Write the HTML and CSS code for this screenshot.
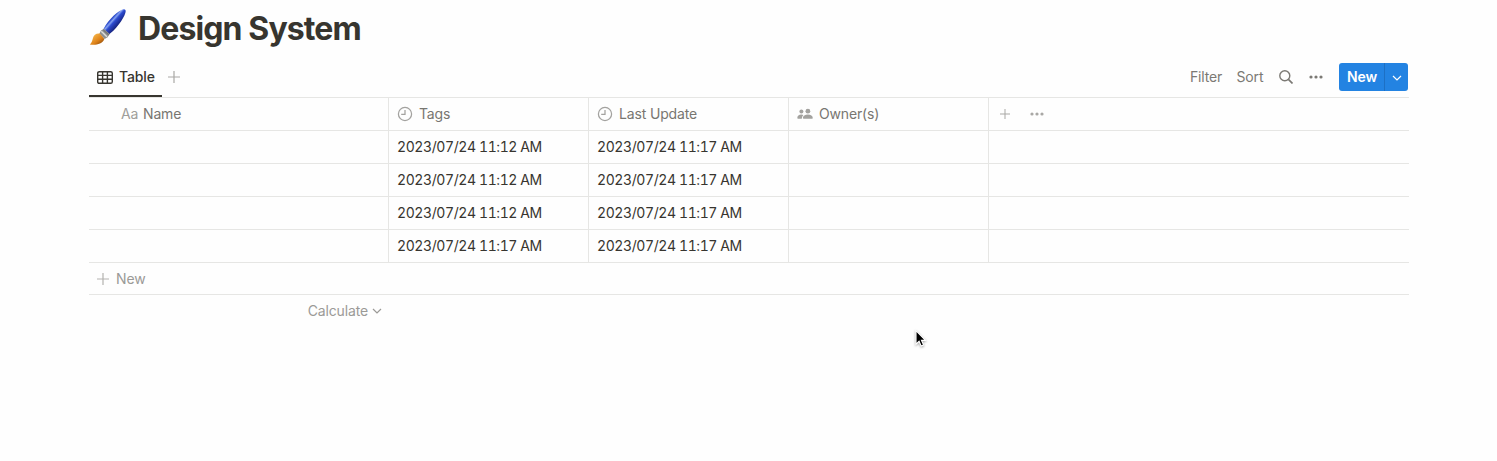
FILE: index.html
```html
<!DOCTYPE html>
<html lang="en">
<head>
<meta charset="utf-8">
<title>Design System</title>
<link rel="stylesheet" href="styles.css">
</head>
<body>
<svg width="0" height="0" class="defs" aria-hidden="true">
  <defs>
    <linearGradient id="handle" gradientUnits="userSpaceOnUse" x1="20" y1="10" x2="29" y2="18">
      <stop offset="0" stop-color="#1c2f96"/><stop offset="0.22" stop-color="#2f4fd0"/><stop offset="0.36" stop-color="#86a2f0"/>
      <stop offset="0.52" stop-color="#2c4bd0"/><stop offset="1" stop-color="#141f78"/>
    </linearGradient>
    <linearGradient id="bristle" x1="0" y1="0" x2="1" y2="1">
      <stop offset="0.2" stop-color="#f3b145"/><stop offset="0.6" stop-color="#dd8118"/><stop offset="1" stop-color="#70380a"/>
    </linearGradient>
    <symbol id="clock" viewBox="0 0 16 16"><g fill="none" stroke="currentColor" stroke-width="1.25"><circle cx="8" cy="8" r="6.6"/><path d="M8 3.9V8.4H4.2"/></g></symbol>
    <symbol id="plus" viewBox="0 0 12 12"><path d="M6 0V12M0 6H12" fill="none" stroke="currentColor" stroke-width="1.2"/></symbol>
    <symbol id="dots" viewBox="0 0 14 4"><g fill="currentColor"><circle cx="2" cy="2" r="1.6"/><circle cx="7" cy="2" r="1.6"/><circle cx="12" cy="2" r="1.6"/></g></symbol>
    <symbol id="chevron" viewBox="0 0 10 6"><path d="M1 1L5 5L9 1" fill="none" stroke="currentColor" stroke-width="1.2"/></symbol>
  </defs>
</svg>
<main class="page">
  <header class="title-bar">
    <svg class="brush" viewBox="0 0 38 38">
      <path d="M13.5 23.5C16.5 15 26 5 33 1.7C36 .4 37.4 2 36.4 4.8C34.5 11.5 26.5 22 18.4 27.8Z" fill="url(#handle)"/>
      <path d="M12 22.4L15 20.8L20.7 26L18.6 29.2L15.7 31L10.3 25.8Z" fill="#8f908f"/>
      <path d="M12.3 23.3L17.9 28.8" stroke="#deded9" stroke-width="1.5"/>
      <path d="M14.3 21.9L19.8 27" stroke="#555" stroke-width=".7"/>
      <path d="M10.8 25.6C7 25.2 4.7 27.2 3.9 30.2C3.3 32.8 2.6 34.8.8 36.5C6 37.4 13.2 36.6 15.4 31Z" fill="url(#bristle)"/>
    </svg>
    <h1 class="title">Design System</h1>
  </header>
  <nav class="toolbar">
    <div class="tab">
      <svg class="icon-table" viewBox="0 0 16 13"><path d="M2.3.7H13.7Q15.3.7 15.3 2.3V10.7Q15.3 12.3 13.7 12.3H2.3Q.7 12.3.7 10.7V2.3Q.7.7 2.3.7ZM.7 4.4H15.3M.7 8.3H15.3M5.6.7V12.3M10.4.7V12.3" fill="none" stroke="currentColor" stroke-width="1.4"/></svg>
      <span class="tab-label">Table</span>
    </div>
    <svg class="add-view"><use href="#plus"/></svg>
    <div class="actions">
      <span class="filter">Filter</span>
      <span class="sort">Sort</span>
      <svg class="icon-search" viewBox="0 0 14 14"><g fill="none" stroke="currentColor" stroke-width="1.4"><circle cx="5.8" cy="5.8" r="5"/><path d="M9.4 9.4L13.5 13.5" stroke-width="1.7"/></g></svg>
      <svg class="icon-more"><use href="#dots"/></svg>
      <div class="new-button">
        <span class="new-label">New</span>
        <span class="new-menu"><svg class="chevron"><use href="#chevron"/></svg></span>
      </div>
    </div>
  </nav>
  <section class="table">
    <div class="row head">
      <div class="cell name"><span class="aa">Aa</span><span class="h-name">Name</span></div>
      <div class="cell"><svg class="icon"><use href="#clock"/></svg><span class="h-tags">Tags</span></div>
      <div class="cell"><svg class="icon"><use href="#clock"/></svg><span class="h-update">Last Update</span></div>
      <div class="cell"><svg class="icon" viewBox="0 0 16 16"><g fill="currentColor"><circle cx="4.4" cy="5.5" r="2"/><circle cx="10.9" cy="5.2" r="2.4"/><path d="M.3 11.9C.3 9.8 2 8.4 4.3 8.4Q5.6 8.4 6.4 8.9Q5 10 4.8 12.7H1.1Q.3 12.7.3 11.9ZM5.9 11.9C5.9 9.9 8.1 8.6 10.9 8.6S15.8 9.9 15.8 11.9Q15.8 12.7 15 12.7H6.7Q5.9 12.7 5.9 11.9Z"/></g></svg><span class="h-owner">Owner(s)</span></div>
      <div class="cell extra"><svg class="add-col"><use href="#plus"/></svg><svg class="more-col"><use href="#dots"/></svg></div>
    </div>
    <div class="row"><div class="cell"></div><div class="cell"><span class="date">2023/07/24 11:12 AM</span></div><div class="cell"><span class="date">2023/07/24 11:17 AM</span></div><div class="cell"></div><div class="cell"></div></div>
    <div class="row"><div class="cell"></div><div class="cell"><span class="date">2023/07/24 11:12 AM</span></div><div class="cell"><span class="date">2023/07/24 11:17 AM</span></div><div class="cell"></div><div class="cell"></div></div>
    <div class="row"><div class="cell"></div><div class="cell"><span class="date">2023/07/24 11:12 AM</span></div><div class="cell"><span class="date">2023/07/24 11:17 AM</span></div><div class="cell"></div><div class="cell"></div></div>
    <div class="row"><div class="cell"></div><div class="cell"><span class="date">2023/07/24 11:17 AM</span></div><div class="cell"><span class="date">2023/07/24 11:17 AM</span></div><div class="cell"></div><div class="cell"></div></div>
    <div class="new-row"><svg class="add-row"><use href="#plus"/></svg><span class="add-label">New</span></div>
    <div class="calc"><span class="calc-label">Calculate</span><svg class="chevron"><use href="#chevron"/></svg></div>
  </section>
</main>
<svg class="cursor" viewBox="0 0 14 20"><path d="M2 1.5V15.2L5.1 12.3L7.2 17.1L9.6 16L7.5 11.4H11.5Z" fill="#000" stroke="#fff" stroke-width="1.1"/></svg>
</body>
</html>
```
FILE: styles.css
```css
* { box-sizing: border-box; }
body {
  margin: 0;
  height: 461px;
  overflow: hidden;
  background: #fefefe;
  color: #37352f;
  font-family: Inter, "Liberation Sans", sans-serif;
  font-size: 14px;
  line-height: 20px;
  letter-spacing: -0.15px;
}
svg { display: block; flex: none; }
span { white-space: nowrap; }
.defs { position: absolute; }
.page { width: 1320px; margin-left: 89px; }
.title-bar { display: flex; height: 57px; padding-top: 8px; }
.brush { width: 38px; height: 38px; margin-top: -0.5px; }
.title {
  margin: 0 0 0 11px;
  font-size: 32px;
  line-height: 41px;
  font-weight: 700;
  letter-spacing: -0.88px;
  white-space: nowrap;
}
.toolbar {
  display: flex;
  align-items: center;
  height: 41px;
  border-bottom: 1px solid #e6e6e4;
}
.tab {
  display: flex;
  align-items: center;
  width: 73px;
  height: 40px;
  padding-left: 8px;
  border-bottom: 2px solid #37352f;
  padding-top: 2px;
}
.icon-table { width: 16px; height: 13px; }
.tab-label { margin-left: 6px; font-weight: 500; }
.add-view { width: 12px; height: 12px; margin-left: 6px; color: #a9a8a5; }
.actions { display: flex; align-items: center; margin-left: auto; margin-right: 1px; color: #7b7974; }
.filter { width: 46.5px; }
.sort { width: 42.5px; }
.icon-search { width: 14px; height: 14px; }
.icon-more { width: 14px; height: 4px; margin-left: 15.5px; }
.new-button {
  display: flex;
  width: 69px;
  height: 28px;
  margin-left: 16.5px;
  overflow: hidden;
  border-radius: 3px;
  background: #2383e2;
  color: #fff;
}
.new-label { width: 46px; padding-left: 8px; line-height: 28px; font-weight: 600; border-right: 1px solid #1d70c4; }
.new-menu { display: grid; flex: 1; place-items: center; padding-top: 2px; }
.chevron { width: 10px; height: 6px; }
.row {
  display: grid;
  grid-template-columns: 300px 200px 200px 200px 420px;
  height: 33px;
  border-bottom: 1px solid #e6e6e4;
}
.cell { display: flex; align-items: center; padding-left: 8px; border-right: 1px solid #e6e6e4; }
.cell:last-child { border-right: 0; }
.head { color: #787671; }
.head .name { padding-left: 32px; }
.aa { width: 22px; color: #a09f9b; }
.icon { width: 16px; height: 16px; margin-right: 6px; color: #a3a29f; }
.date { font-variant-numeric: tabular-nums; letter-spacing: -0.41px; }
.extra { color: #a9a8a5; }
.add-col { width: 10px; height: 10px; margin-left: 3px; }
.more-col { width: 14px; height: 4px; margin-left: 20px; }
.new-row {
  display: flex;
  align-items: center;
  height: 32px;
  padding-left: 8px;
  border-bottom: 1px solid #e6e6e4;
  color: #9b9a97;
}
.add-row { width: 12px; height: 12px; color: #b3b2af; }
.add-label { margin-left: 7px; }
.calc { display: flex; align-items: center; justify-content: flex-end; width: 293px; height: 32px; color: #9b9a97; }
.calc .chevron { margin-left: 4px; }
.cursor { position: absolute; left: 913.5px; top: 329px; width: 14px; height: 20px; filter: drop-shadow(0 1px 1px rgba(0, 0, 0, 0.35)); }
```
